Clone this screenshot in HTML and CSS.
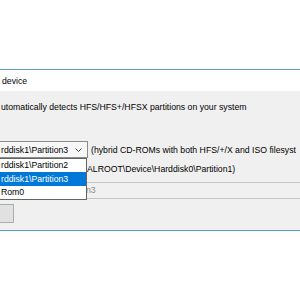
FILE: index.html
```html
<!DOCTYPE html>
<html lang="en">
<head>
    <meta charset="UTF-8">
    <title>Select device</title>
    <link rel="stylesheet" href="styles.css">
</head>
<body>
    <div class="desktop"></div>

    <div class="window">
        <div class="title">device</div>

        <div class="content">
            <p class="desc">utomatically detects HFS/HFS+/HFSX partitions on your system</p>

            <div class="combo-row">
                <div class="combo">
                    <span class="combo-text">rddisk1\Partition3</span>
                    <svg class="arrow" width="7" height="4" viewBox="0 0 7 4">
                        <path d="M0.5 0.5 L3.5 3.5 L6.5 0.5" fill="none" stroke="#444" stroke-width="1"/>
                    </svg>
                </div>
                <span class="hint">(hybrid CD-ROMs with both HFS/+/X and ISO filesyst</span>
            </div>

            <p class="path">ALROOT\Device\Harddisk0\Partition1)</p>

            <div class="field">n3</div>

            <button class="btn"></button>

            <!-- open dropdown of the combo -->
            <ul class="list">
                <li>rddisk1\Partition2</li>
                <li class="selected">rddisk1\Partition3</li>
                <li>Rom0</li>
            </ul>
        </div>
    </div>
</body>
</html>
```

FILE: styles.css
```css
body {
    margin: 0;
    background: #fff;
    font-family: "Liberation Sans", Arial, sans-serif;
    font-size: 8.7px;
    color: #000;
    overflow: hidden;
}
.desktop {
    height: 69px;
}
.window {
    border-top: 1px solid #5b9fb8;
    border-bottom: 1px solid #5b9fb8;
}
.title {
    height: 21px;
    line-height: 22px;
    padding-left: 2px;
    background: #fff;
}
.content {
    position: relative;
    height: 139px;
    background: #f0f0f0;
    padding-top: 10px;
    box-sizing: border-box;
}
.desc {
    margin: 0;
    padding-left: 1px;
    line-height: 13px;
    white-space: nowrap;
}
.combo-row {
    display: flex;
    align-items: center;
    margin-top: 27px;
    white-space: nowrap;
}
.combo {
    display: flex;
    align-items: center;
    justify-content: space-between;
    width: 81px;
    height: 15px;
    padding: 0 5px 0 1px;
    border: 1px solid #8c8c8c;
    border-left: 0;
    background: #f7f7f7;
}
.arrow {
    margin-top: 1px;
}
.hint {
    margin-left: 3px;
    overflow: hidden;
}
.path {
    margin: 5px 0 0 87px;
    line-height: 12px;
    white-space: nowrap;
}
.field {
    margin-top: 7px;
    height: 15px;
    line-height: 15px;
    padding-left: 86px;
    border-top: 1px solid #c4c4c4;
    border-bottom: 1px solid #c4c4c4;
    color: #8a8a8a;
}
.btn {
    display: block;
    margin-top: 5px;
    width: 14px;
    height: 19px;
    background: #e1e1e1;
    border: 1px solid #adadad;
    border-left: 0;
    padding: 0;
}
.list {
    position: absolute;
    left: 0;
    top: 67px;
    width: 86px;
    margin: 0;
    padding: 0;
    list-style: none;
    background: #fff;
    border: 1px solid #646464;
    border-left: 0;
    white-space: nowrap;
}
.list li {
    height: 13px;
    line-height: 13px;
    padding-left: 1px;
}
.list li.selected {
    height: 14px;
    line-height: 14px;
    background: #0078d7;
    color: #fff;
}
```
